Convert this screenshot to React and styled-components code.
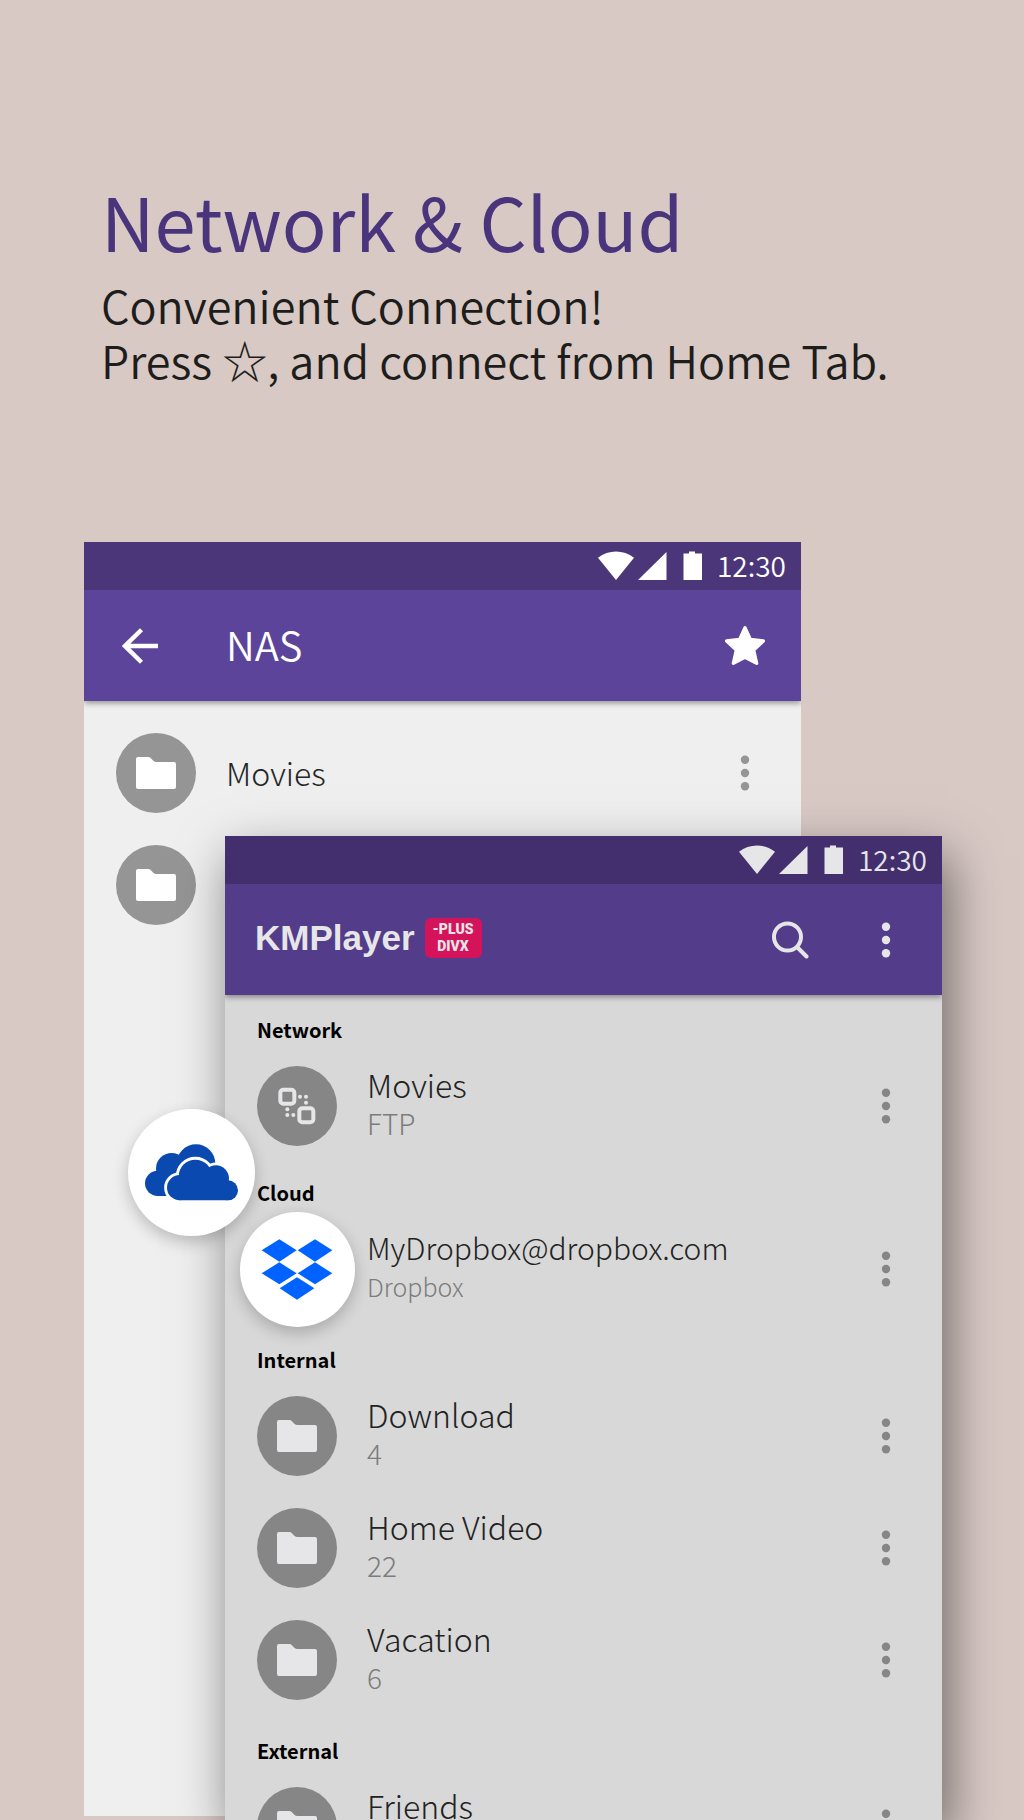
import React from "react";
import styled, { createGlobalStyle, ThemeProvider } from "styled-components";

const theme = {
  fonts: {
    base: `"Noto Sans CJK KR", "Noto Sans", sans-serif`,
    logo: `"Liberation Sans", Arial, sans-serif`,
    badge: `Roboto, "Liberation Sans", sans-serif`,
  },
  page: "#d8c9c5",
  title: "#4a347c",
  text: "#1d1d1b",
};

const lightWindow = {
  status: "#4c367a",
  bar: "#5c449a",
  body: "#efefef",
  icon: "#ffffff",
  avatar: "#959595",
  label: "#262626",
  sub: "#848484",
};

const dimWindow = {
  status: "#442f6e",
  bar: "#533c8a",
  body: "#d8d8d8",
  icon: "#e6e6e8",
  avatar: "#868686",
  label: "#222222",
  sub: "#7c7c7c",
};

const GlobalStyle = createGlobalStyle`
  *, *::before, *::after {
    box-sizing: border-box;
  }
  body {
    margin: 0;
    font-family: ${theme.fonts.base};
    background: ${theme.page};
  }
`;

const Page = styled.main`
  display: flex;
  flex-direction: column;
  height: 100vh;
  overflow: hidden;
  background: ${theme.page};
`;

const Intro = styled.header`
  padding: 172px 64px 0 101px;
`;

const Title = styled.h1`
  margin: 0;
  font-size: 74px;
  font-weight: 400;
  line-height: 96px;
  color: ${theme.title};
`;

const Lead = styled.p`
  margin: 9px 0 0;
  font-size: 45px;
  font-weight: 350;
  line-height: 55px;
  color: ${theme.text};
`;

const Stage = styled.section`
  display: grid;
  grid-template-rows: minmax(0, 1fr);
  flex: 1;
  min-height: 0;
  padding: 155px 82px 0 84px;
`;

const Window = styled.article`
  grid-area: 1 / 1;
  background: ${(props) => props.theme.body};
`;

const BackWindow = styled(Window)`
  margin: 0 141px 4px 0;
`;

const FrontWindow = styled(Window)`
  position: relative;
  margin: 294px 0 0 141px;
  box-shadow: 6px 20px 48px rgba(0, 0, 0, 0.5);
`;

const StatusBar = styled.div`
  display: flex;
  justify-content: flex-end;
  align-items: center;
  height: 48px;
  padding-right: 15px;
  color: ${(props) => props.theme.icon};
  background: ${(props) => props.theme.status};
`;

const Clock = styled.time`
  margin-left: 14px;
  padding-bottom: 2px;
  font-size: 28px;
  font-weight: 350;
  line-height: 44px;
`;

const AppBar = styled.div`
  display: flex;
  align-items: center;
  height: 111px;
  padding: 0 32px;
  color: ${(props) => props.theme.icon};
  background: ${(props) => props.theme.bar};
  box-shadow: 0 2px 6px rgba(0, 0, 0, 0.4);
  clip-path: inset(0 0 -12px 0);
`;

const BarTitle = styled.h2`
  flex: 1;
  margin: 0 0 0 62px;
  padding-bottom: 4px;
  font-size: 40px;
  font-weight: 350;
  line-height: 48px;
`;

const IconButton = styled.button`
  display: flex;
  align-items: center;
  justify-content: center;
  width: 48px;
  height: 48px;
  padding: 0;
  border: 0;
  color: ${(props) => (props.$muted ? props.theme.avatar : "inherit")};
  background: none;
  cursor: pointer;
`;

const Brand = styled.div`
  display: flex;
  flex: 1;
  align-items: center;
  margin-left: -2px;
  padding-bottom: 4px;
`;

const BrandName = styled.strong`
  font-family: ${theme.fonts.logo};
  font-size: 35px;
  line-height: 40px;
`;

const BrandBadge = styled.span`
  display: flex;
  flex-direction: column;
  align-items: center;
  margin-left: 10px;
  width: 57px;
  padding: 3px 0;
  border-radius: 6px;
  font-family: ${theme.fonts.badge};
  font-size: 14px;
  font-weight: 900;
  line-height: 17px;
  background: #d5135a;
`;

const Actions = styled.div`
  display: flex;
  gap: 48px;
`;

const SectionTitle = styled.h3`
  display: flex;
  align-items: flex-end;
  height: ${(props) => (props.$compact ? "51px" : "55px")};
  margin: 0;
  padding: 0 32px 4px;
  font-size: 20px;
  font-weight: 700;
  line-height: 32px;
  color: #000;
`;

const List = styled.ul`
  margin: 0;
  padding: ${(props) => (props.$spaced ? "16px 0 0" : "0")};
  list-style: none;
`;

const Row = styled.li`
  display: flex;
  align-items: center;
  height: 112px;
  padding: 0 32px;
`;

const Avatar = styled.span`
  display: flex;
  flex: none;
  width: 80px;
  height: 80px;
  border-radius: 50%;
  color: ${(props) => props.theme.icon};
  background: ${(props) => props.theme.avatar};
`;

const RaisedAvatar = styled(Avatar)`
  width: 115px;
  height: 115px;
  margin: 0 -18px 0 -17px;
  background: #fff;
  box-shadow: 0 6px 16px rgba(0, 0, 0, 0.22);
`;

const FloatingAvatar = styled(Avatar)`
  position: absolute;
  top: 273px;
  left: -97px;
  width: 127px;
  height: 127px;
  background: #fff;
  box-shadow: 0 6px 16px rgba(0, 0, 0, 0.22);
`;

const RowText = styled.div`
  flex: 1;
  min-width: 0;
  margin-left: 30px;
  padding-bottom: ${(props) => (props.$single ? "2px" : "6px")};
`;

const RowLabel = styled.div`
  font-size: ${(props) => (props.$small ? "30px" : "32px")};
  font-weight: 300;
  line-height: 40px;
  color: ${(props) => props.theme.label};
`;

const RowSub = styled.div`
  font-size: ${(props) => (props.$small ? "25px" : "28px")};
  font-weight: 300;
  line-height: 38px;
  color: ${(props) => props.theme.sub};
`;

const StatusIcons = () => (
  <svg width="105" height="30" viewBox="0 0 105 30" fill="currentColor" aria-hidden="true">
    <path d="M0 6.8C10.500-1.600 25.500-1.600 36 6.800L18 29Z" />
    <path d="M40 29L68.500 1V29Z" />
    <path d="M91 .5H97V2.500H104V29H85.500V2.500H91Z" />
  </svg>
);

const BackIcon = () => (
  <svg width="36" height="36" viewBox="0 0 36 36" fill="none" stroke="currentColor" strokeWidth="4.400" aria-hidden="true">
    <path d="M19.500 1.800L3 18L19.500 34.200M3 18H36" />
  </svg>
);

const StarIcon = () => (
  <svg width="42" height="42" viewBox="0 0 126 126" fill="currentColor" stroke="currentColor" strokeWidth="10" strokeLinejoin="round" aria-hidden="true">
    <path d="M63 8L79 43L118 48L89 75L98 115L63 97L28 115L37 75L8 48L47 43Z" />
  </svg>
);

const MoreIcon = () => (
  <svg width="10" height="36" viewBox="0 0 10 36" fill="currentColor" aria-hidden="true">
    <circle cx="5" cy="4.700" r="4.200" />
    <circle cx="5" cy="18" r="4.200" />
    <circle cx="5" cy="31.300" r="4.200" />
  </svg>
);

const SearchIcon = () => (
  <svg width="38" height="38" viewBox="0 0 38 38" fill="none" stroke="currentColor" strokeWidth="4" strokeLinecap="round" aria-hidden="true">
    <circle cx="16.500" cy="16" r="13.500" />
    <path d="M26.500 26.500L35.500 35.500" />
  </svg>
);

const FolderIcon = () => (
  <svg width="100%" height="100%" viewBox="0 0 240 240" fill="currentColor" aria-hidden="true">
    <path d="M66 72H97Q101 72 104 75L112 83Q116 87 121 87H174Q180 87 180 93V162Q180 168 174 168H66Q60 168 60 162V78Q60 72 66 72Z" />
  </svg>
);

const FtpIcon = () => (
  <svg width="100%" height="100%" viewBox="0 0 240 240" fill="currentColor" aria-hidden="true">
    <g fill="none" stroke="currentColor" strokeWidth="12">
      <rect x="70" y="71" width="42" height="42" rx="9" />
      <rect x="127" y="127" width="42" height="42" rx="9" />
    </g>
    <circle cx="129" cy="92" r="6" />
    <circle cx="147" cy="92" r="6" />
    <circle cx="147" cy="110" r="6" />
    <circle cx="91" cy="130" r="6" />
    <circle cx="91" cy="147" r="6" />
    <circle cx="109" cy="147" r="6" />
  </svg>
);

const DropboxIcon = () => (
  <svg width="100%" height="100%" viewBox="390 636 345 345" fill="#0062ff" aria-hidden="true">
    <path d="M508 718L560 751L508 785L455 751Z" />
    <path d="M615 718L667 751L615 785L563 751Z" />
    <path d="M508 787L560 820L508 853L455 820Z" />
    <path d="M615 787L667 820L615 853L563 820Z" />
    <path d="M561 832L613 865L561 899L509 865Z" />
  </svg>
);

const FrontCloud = () => (
  <>
    <circle cx="209" cy="563" r="38" />
    <circle cx="256" cy="529" r="50" />
    <circle cx="318" cy="535" r="39" />
    <circle cx="354" cy="571" r="30" />
    <path d="M209 545H354V601H209Z" />
  </>
);

const OneDriveIcon = () => (
  <svg width="100%" height="100%" viewBox="54 327 381 381" fill="#0a4ab0" aria-hidden="true">
    <circle cx="143" cy="550" r="38" />
    <circle cx="185" cy="506" r="47" />
    <circle cx="258" cy="491" r="58" />
    <path d="M143 520H240V588H143Z" />
    <g fill="#fff" stroke="#fff" strokeWidth="17">
      <FrontCloud />
    </g>
    <FrontCloud />
  </svg>
);

const icons = {
  folder: FolderIcon,
  ftp: FtpIcon,
  dropbox: DropboxIcon,
};

const sections = [
  { title: "Network", items: [{ name: "Movies", sub: "FTP", icon: "ftp" }] },
  {
    title: "Cloud",
    compact: true,
    items: [{ name: "MyDropbox@dropbox.com", sub: "Dropbox", icon: "dropbox", raised: true }],
  },
  {
    title: "Internal",
    items: [
      { name: "Download", sub: "4", icon: "folder" },
      { name: "Home Video", sub: "22", icon: "folder" },
      { name: "Vacation", sub: "6", icon: "folder" },
    ],
  },
  { title: "External", items: [{ name: "Friends", sub: "", icon: "folder" }] },
];

const Status = () => (
  <StatusBar>
    <StatusIcons />
    <Clock>12:30</Clock>
  </StatusBar>
);

const MediaRow = (props) => {
  const { name, sub, icon, raised } = props;
  const Icon = icons[icon];
  const Holder = raised ? RaisedAvatar : Avatar;

  return (
    <Row>
      <Holder>
        <Icon />
      </Holder>
      <RowText $single={sub === undefined}>
        {name && <RowLabel $small={raised}>{name}</RowLabel>}
        {sub !== undefined && <RowSub $small={raised}>{sub || "\u00a0"}</RowSub>}
      </RowText>
      {name && (
        <IconButton $muted aria-label={`More options for ${name}`}>
          <MoreIcon />
        </IconButton>
      )}
    </Row>
  );
};

const App = () => (
  <ThemeProvider theme={lightWindow}>
    <GlobalStyle />
    <Page>
      <Intro>
        <Title>Network &amp; Cloud</Title>
        <Lead>
          Convenient Connection!
          <br />
          Press ☆, and connect from Home Tab.
        </Lead>
      </Intro>
      <Stage>
        <BackWindow>
          <Status />
          <AppBar>
            <IconButton aria-label="Back">
              <BackIcon />
            </IconButton>
            <BarTitle>NAS</BarTitle>
            <IconButton aria-label="Favorite">
              <StarIcon />
            </IconButton>
          </AppBar>
          <List $spaced>
            <MediaRow name="Movies" icon="folder" />
            <MediaRow icon="folder" />
          </List>
        </BackWindow>
        <ThemeProvider theme={dimWindow}>
          <FrontWindow>
            <Status />
            <AppBar>
              <Brand>
                <BrandName>KMPlayer</BrandName>
                <BrandBadge>
                  <span>-PLUS</span>
                  <span>DIVX</span>
                </BrandBadge>
              </Brand>
              <Actions>
                <IconButton aria-label="Search">
                  <SearchIcon />
                </IconButton>
                <IconButton aria-label="More options">
                  <MoreIcon />
                </IconButton>
              </Actions>
            </AppBar>
            {sections.map((section) => (
              <section key={section.title}>
                <SectionTitle $compact={section.compact}>{section.title}</SectionTitle>
                <List>
                  {section.items.map((item) => (
                    <MediaRow key={item.name} {...item} />
                  ))}
                </List>
              </section>
            ))}
            <FloatingAvatar>
              <OneDriveIcon />
            </FloatingAvatar>
          </FrontWindow>
        </ThemeProvider>
      </Stage>
    </Page>
  </ThemeProvider>
);

export default App;
